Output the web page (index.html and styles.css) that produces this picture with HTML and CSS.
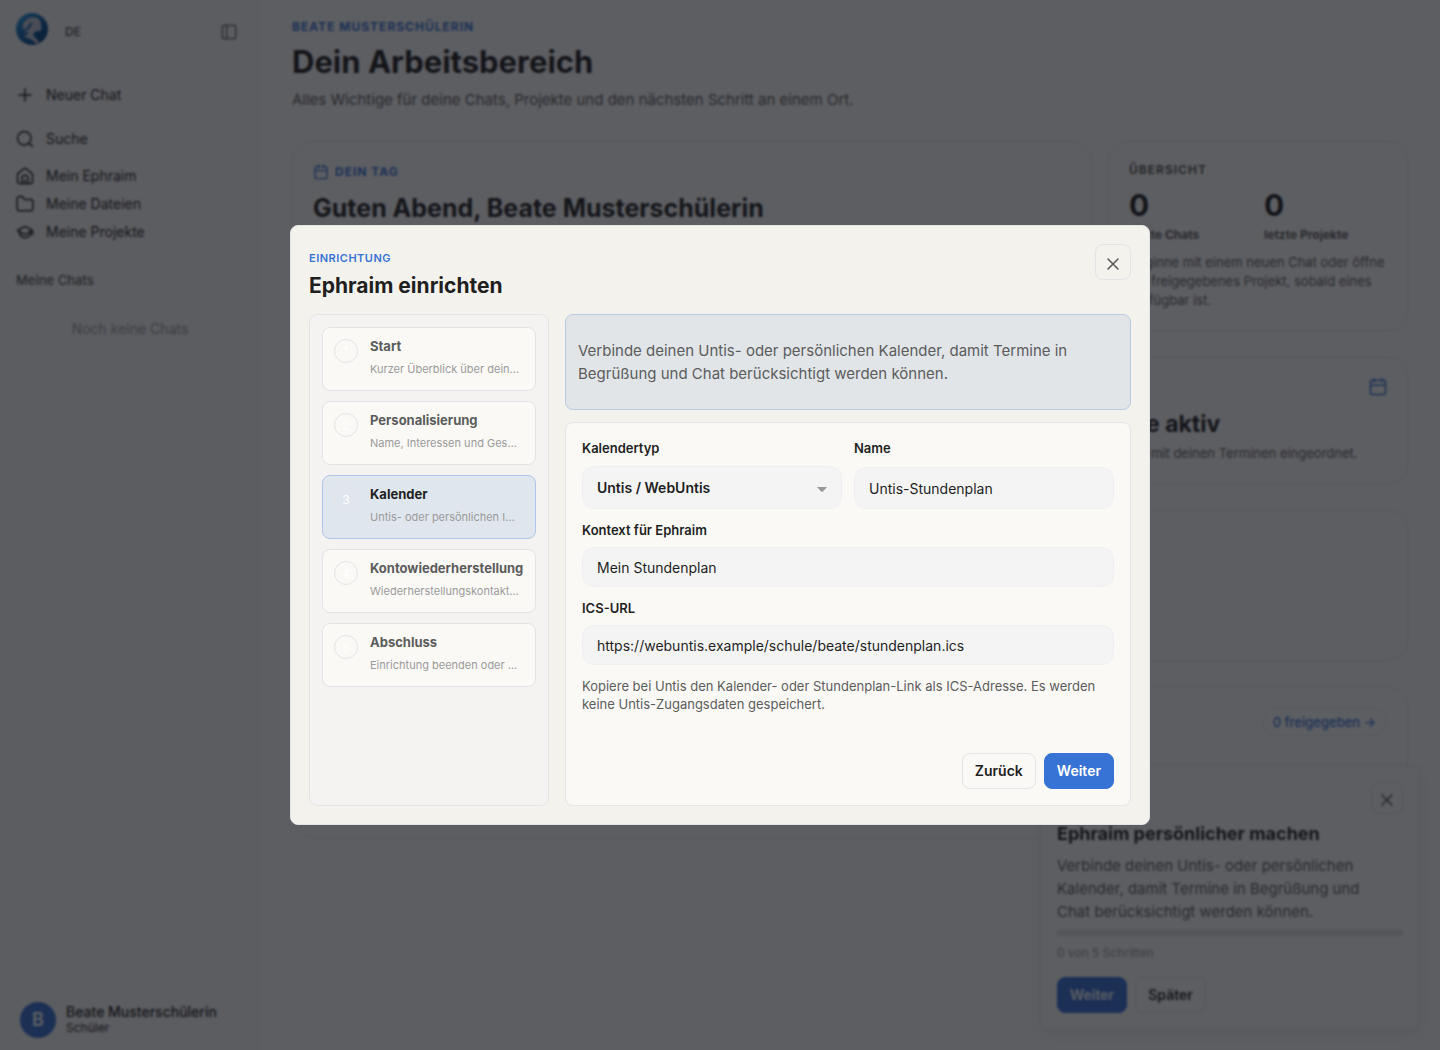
FILE: index.html
```html
<!DOCTYPE html>
<html lang="de">
<head>
    <meta charset="UTF-8">
    <meta name="viewport" content="width=device-width, initial-scale=1.0">
    <title>Ephraim - Dein Arbeitsbereich</title>
    <link rel="stylesheet" href="styles.css">
</head>
<body>
    <div class="app">
        <aside class="sidebar">
            <div class="sidebar-top">
                <svg class="logo" viewBox="0 0 32 32" aria-hidden="true">
                    <defs>
                        <linearGradient id="logo-fill" x1="0" y1="0" x2="1" y2="1">
                            <stop offset="0" stop-color="#2ba6ea"/>
                            <stop offset="0.5" stop-color="#0a5fa8"/>
                            <stop offset="1" stop-color="#04356f"/>
                        </linearGradient>
                    </defs>
                    <circle cx="16" cy="16" r="16" fill="url(#logo-fill)"/>
                    <path d="M9 8C12 4 19 3 23 6C25 8 25 11 25 13C26 16 25 18 22 18C19 18 17 20 17 22C18 24 21 26 23 29L20 31C18 27 13 25 7 24C10 23 12 21 13 19L8 20C6 16 6 11 9 8Z" fill="#c3c7d6"/>
                    <path d="M16 9C16 13 13 17 10 18L6 22C5 20 6 17 8 15L10 17C11 14 13 11 16 9Z" fill="#1769b5"/>
                </svg>
                <button class="lang" type="button">DE</button>
                <button class="icon-button" type="button" aria-label="Seitenleiste">
                    <svg class="icon-small" viewBox="0 0 24 24"><rect x="2" y="2" width="20" height="20" rx="3"/><path d="M8.500 2v20"/></svg>
                </button>
            </div>

            <nav>
                <ul class="nav-list">
                    <li class="nav-new"><a href="#chat"><svg class="icon" viewBox="0 0 24 24"><path d="M4 12h16M12 4v16"/></svg>Neuer Chat</a></li>
                    <li class="nav-search"><a href="#suche"><svg class="icon" viewBox="0 0 24 24"><circle cx="11" cy="11" r="9"/><path d="M17.500 17.500L22 22"/></svg>Suche</a></li>
                    <li><a href="#ephraim"><svg class="icon" viewBox="0 0 24 24"><path d="M2 10.500a3 3 0 0 1 1.200-2.400L10 2.700a3 3 0 0 1 4 0l6.800 5.400A3 3 0 0 1 22 10.500V19a3 3 0 0 1-3 3H5a3 3 0 0 1-3-3Z"/><path d="M8 22v-7a4 4 0 0 1 8 0v7M12 17v5"/></svg>Mein Ephraim</a></li>
                    <li><a href="#dateien"><svg class="icon" viewBox="0 0 24 24"><path d="M1.500 5a3 3 0 0 1 3-3h4l3 4h8a3 3 0 0 1 3 3v9a3 3 0 0 1-3 3h-15a3 3 0 0 1-3-3Z"/></svg>Meine Dateien</a></li>
                    <li><a href="#projekte"><svg class="icon" viewBox="0 0 24 24"><path d="M2 10l8-4.500a4 4 0 0 1 4 0L22 10l-8 4.500a4 4 0 0 1-4 0ZM22 10v6M5 12v4q7 7 14 0v-4"/></svg>Meine Projekte</a></li>
                </ul>
            </nav>

            <h2 class="sidebar-title">Meine Chats</h2>
            <p class="sidebar-empty">Noch keine Chats</p>

            <div class="user">
                <span class="avatar">B</span>
                <div>
                    <p class="user-name">Beate Musterschülerin</p>
                    <p class="user-role">Schüler</p>
                </div>
            </div>
        </aside>

        <main class="workspace">
            <header>
                <p class="eyebrow">Beate Musterschülerin</p>
                <h1>Dein Arbeitsbereich</h1>
                <p class="lead">Alles Wichtige für deine Chats, Projekte und den nächsten Schritt an einem Ort.</p>
            </header>

            <div class="row-top">
                <section class="card">
                    <p class="eyebrow eyebrow-icon"><svg class="icon-small" viewBox="0 0 24 24"><rect x="3" y="4" width="18" height="18" rx="3"/><path d="M3 10h18M8 1.500v4M16 1.500v4"/></svg>Dein Tag</p>
                    <h2 class="greeting">Guten Abend, Beate Musterschülerin</h2>
                </section>
                <section class="card">
                    <p class="eyebrow eyebrow-muted">Übersicht</p>
                    <div class="stats">
                        <div><strong>0</strong><span>letzte Chats</span></div>
                        <div><strong>0</strong><span>letzte Projekte</span></div>
                    </div>
                    <p class="card-text">Beginne mit einem neuen Chat oder öffne ein freigegebenes Projekt, sobald eines verfügbar ist.</p>
                </section>
            </div>

            <div class="row-tiles">
                <section class="card"></section>
                <section class="card"></section>
                <section class="card tile">
                    <svg class="icon tile-icon" viewBox="0 0 24 24"><rect x="2" y="3" width="20" height="19" rx="3"/><path d="M2 9.500h20M7 1v4M17 1v4"/></svg>
                    <h2>Termine aktiv</h2>
                    <p class="card-text">Projekte sind mit deinen Terminen eingeordnet.</p>
                </section>
            </div>

            <section class="card card-wide"></section>
            <section class="card card-wide card-projects">
                <a class="pill" href="#projekte">0 freigegeben →</a>
            </section>
        </main>
    </div>

    <aside class="toast">
        <div class="toast-top">
            <p class="modal-eyebrow">Einrichtung</p>
            <button class="close close-small" type="button" aria-label="Schließen"><svg viewBox="0 0 12 12"><path d="M1 1l10 10M11 1L1 11"/></svg></button>
        </div>
        <h2>Ephraim persönlicher machen</h2>
        <p class="toast-text">Verbinde deinen Untis- oder persönlichen Kalender, damit Termine in Begrüßung und Chat berücksichtigt werden können.</p>
        <div class="progress"></div>
        <p class="toast-steps">0 von 5 Schritten</p>
        <div class="actions">
            <button class="btn btn-primary" type="button">Weiter</button>
            <button class="btn" type="button">Später</button>
        </div>
    </aside>

    <div class="overlay">
        <div class="modal" role="dialog" aria-modal="true" aria-labelledby="modal-title">
            <header class="modal-header">
                <div>
                    <p class="modal-eyebrow">Einrichtung</p>
                    <h2 id="modal-title">Ephraim einrichten</h2>
                </div>
                <button class="close" type="button" aria-label="Schließen"><svg viewBox="0 0 12 12"><path d="M1 1l10 10M11 1L1 11"/></svg></button>
            </header>

            <div class="modal-body">
                <ol class="steps">
                    <li><button class="step" type="button"><span class="step-number">1</span><span class="step-text"><strong>Start</strong><small>Kurzer Überblick über deine Einrichtung</small></span></button></li>
                    <li><button class="step" type="button"><span class="step-number">2</span><span class="step-text"><strong>Personalisierung</strong><small>Name, Interessen und Gesprächsstil</small></span></button></li>
                    <li><button class="step active" type="button"><span class="step-number">3</span><span class="step-text"><strong>Kalender</strong><small>Untis- oder persönlichen ICS-Kalender</small></span></button></li>
                    <li><button class="step" type="button"><span class="step-number">4</span><span class="step-text"><strong>Kontowiederherstellung</strong><small>Wiederherstellungskontakte hinterlegen</small></span></button></li>
                    <li><button class="step" type="button"><span class="step-number">5</span><span class="step-text"><strong>Abschluss</strong><small>Einrichtung beenden oder übernehmen</small></span></button></li>
                </ol>

                <div class="modal-content">
                    <p class="intro">Verbinde deinen Untis- oder persönlichen Kalender, damit Termine in Begrüßung und Chat berücksichtigt werden können.</p>

                    <form class="form">
                        <div class="field-row">
                            <div class="field">
                                <label for="type">Kalendertyp</label>
                                <div class="select">
                                    <select id="type">
                                        <option>Untis / WebUntis</option>
                                    </select>
                                    <svg class="select-arrow" viewBox="0 0 10 5"><path d="M0 0h10L6 4.500Q5 5 4 4.500Z"/></svg>
                                </div>
                            </div>
                            <div class="field">
                                <label for="name">Name</label>
                                <input id="name" type="text" value="Untis-Stundenplan">
                            </div>
                        </div>
                        <div class="field">
                            <label for="context">Kontext für Ephraim</label>
                            <input id="context" type="text" value="Mein Stundenplan">
                        </div>
                        <div class="field">
                            <label for="url">ICS-URL</label>
                            <input id="url" type="url" value="https://webuntis.example/schule/beate/stundenplan.ics">
                        </div>
                        <p class="hint">Kopiere bei Untis den Kalender- oder Stundenplan-Link als ICS-Adresse. Es werden keine Untis-Zugangsdaten gespeichert.</p>
                        <div class="actions form-actions">
                            <button class="btn" type="button">Zurück</button>
                            <button class="btn btn-primary" type="button">Weiter</button>
                        </div>
                    </form>
                </div>
            </div>
        </div>
    </div>
</body>
</html>
```
FILE: styles.css
```css
* {
    margin: 0;
    padding: 0;
    box-sizing: border-box;
}

body {
    font-family: Inter, "Liberation Sans", sans-serif;
    font-size: 14px;
    line-height: 20px;
    background-color: #fbfbfb;
    color: #1f1f1f;
    overflow: hidden;
}

button, input, select {
    font: inherit;
    color: inherit;
}

button {
    background: none;
    border: none;
    cursor: pointer;
}

a {
    color: inherit;
    text-decoration: none;
}

ul, ol {
    list-style: none;
}

svg {
    fill: none;
    stroke: currentColor;
    stroke-width: 2;
    stroke-linecap: round;
    stroke-linejoin: round;
    flex-shrink: 0;
}

.icon {
    width: 18px;
    height: 18px;
}

.icon-small {
    width: 16px;
    height: 16px;
    display: block;
}

.app {
    display: flex;
    height: 100vh;
}

/* Seitenleiste */
.sidebar {
    width: 260px;
    flex-shrink: 0;
    display: flex;
    flex-direction: column;
    padding: 12px 16px;
    background-color: #f7f7f7;
}

.sidebar-top {
    display: flex;
    align-items: center;
    height: 40px;
    margin-bottom: 29px;
}

.logo {
    width: 32px;
    height: 32px;
    stroke: none;
    margin-bottom: 6px;
}

.lang {
    margin-left: 17px;
    font-size: 12px;
    font-weight: 600;
    color: #5c5c5c;
}

.icon-button {
    margin-left: auto;
    margin-right: 7px;
    color: #5c5c5c;
}

.nav-list a {
    display: flex;
    align-items: center;
    gap: 12px;
    height: 28px;
}

.nav-new {
    margin-bottom: 16px;
}

.nav-search {
    margin-bottom: 9px;
}

.sidebar-title {
    margin-top: 24px;
    font-size: 13px;
    font-weight: 500;
    color: #5c5c5c;
}

.sidebar-empty {
    margin-top: 29px;
    text-align: center;
    color: #9a9a9a;
}

.user {
    display: flex;
    align-items: center;
    gap: 10px;
    margin-top: auto;
    padding-left: 4px;
}

.avatar {
    width: 36px;
    height: 36px;
    border-radius: 50%;
    background-color: #3772d5;
    color: #fff;
    font-size: 18px;
    font-weight: 600;
    line-height: 36px;
    text-align: center;
}

.user-name {
    font-weight: 500;
    line-height: 16px;
}

.user-role {
    font-size: 12px;
    line-height: 16px;
}

/* Arbeitsbereich */
.workspace {
    flex: 1;
    padding: 17px 32px;
}

.eyebrow {
    font-size: 12px;
    font-weight: 700;
    letter-spacing: 1px;
    text-transform: uppercase;
    color: #3772d5;
}

.eyebrow-icon {
    display: flex;
    align-items: center;
    gap: 6px;
}

.eyebrow-muted {
    line-height: 16px;
    color: #5c5c5c;
}

.workspace h1 {
    font-size: 31px;
    line-height: 40px;
    margin-top: 5px;
}

.lead {
    margin-top: 8px;
    font-size: 15px;
    color: #5c5c5c;
}

.card {
    padding: 20px;
    border: 1px solid #e8e8e8;
    border-radius: 20px;
    background-color: #fcfcfc;
}

.row-top {
    display: grid;
    grid-template-columns: 1fr 300px;
    gap: 16px;
    margin-top: 31px;
}

.greeting {
    margin-top: 10px;
    font-size: 25px;
    line-height: 32px;
}

.stats {
    display: grid;
    grid-template-columns: 1fr 1fr;
    gap: 12px;
    margin: 11px 0 8px;
}

.stats strong {
    display: block;
    font-size: 30px;
    line-height: 32px;
}

.stats span {
    display: block;
    font-size: 12px;
    font-weight: 700;
    color: #5c5c5c;
    margin-top: 4px;
}

.card-text {
    font-size: 13px;
    line-height: 19px;
    color: #5c5c5c;
}

.row-tiles {
    display: grid;
    grid-template-columns: repeat(3, 1fr);
    gap: 16px;
    margin-top: 26px;
}

.tile-icon {
    display: block;
    margin-left: auto;
    color: #3772d5;
}

.tile h2 {
    margin: 13px 0 5px;
    font-size: 23px;
    line-height: 30px;
}

.card-wide {
    min-height: 151px;
    margin-top: 26px;
}

.card-projects {
    display: flex;
    justify-content: flex-end;
    align-items: flex-start;
}

.pill {
    padding: 2px 10px;
    border: 1px solid #e8e8e8;
    border-radius: 14px;
    font-size: 13px;
    font-weight: 500;
    line-height: 22px;
    color: #3772d5;
}

/* Hinweis unten rechts */
.toast {
    position: fixed;
    right: 20px;
    bottom: 20px;
    width: 380px;
    padding: 16px;
    border: 1px solid #e8e8e8;
    border-radius: 8px;
    background-color: #fafafa;
    box-shadow: 0 4px 16px rgba(0, 0, 0, 0.06);
}

.toast-top {
    display: flex;
    justify-content: space-between;
}

.toast h2 {
    margin-top: 8px;
    font-size: 18px;
    line-height: 24px;
}

.toast-text {
    margin-top: 8px;
    padding-right: 16px;
    font-size: 15px;
    line-height: 23px;
    color: #5c5c5c;
}

.progress {
    height: 6px;
    margin-top: 7px;
    border-radius: 3px;
    background-color: #e3e3e3;
}

.toast-steps {
    margin: 7px 0 14px;
    font-size: 12px;
    color: #9a9a9a;
}

.actions {
    display: flex;
    gap: 8px;
}

.btn {
    height: 36px;
    padding: 0 12px;
    border: 1px solid #e3e4e6;
    border-radius: 8px;
    font-weight: 600;
}

.btn-primary {
    border-color: #3772d5;
    background-color: #3772d5;
    color: #fff;
}

.close {
    display: flex;
    align-items: center;
    justify-content: center;
    width: 36px;
    height: 36px;
    border: 1px solid #e3e4e6;
    border-radius: 8px;
    color: #555;
}

.close svg {
    width: 12px;
    height: 12px;
    margin-top: 3px;
    stroke-width: 1.500;
}

.close-small {
    width: 32px;
    height: 32px;
}

/* Dialog */
.overlay {
    position: fixed;
    inset: 0;
    display: flex;
    align-items: center;
    justify-content: center;
    background-color: rgba(15, 17, 22, 0.67);
    backdrop-filter: blur(1px);
}

.modal {
    display: flex;
    flex-direction: column;
    width: 860px;
    max-width: 95%;
    min-height: 600px;
    padding: 18px;
    border: 1px solid #e3e4e6;
    border-radius: 8px;
    background-color: #f4f2ed;
}

.modal-header {
    display: flex;
    justify-content: space-between;
    align-items: flex-start;
    padding-bottom: 14px;
}

.modal-eyebrow {
    margin-top: 4px;
    font-size: 11px;
    font-weight: 600;
    letter-spacing: 0.500px;
    text-transform: uppercase;
    color: #3772d5;
}

.modal-header h2 {
    margin-top: 4px;
    font-size: 21px;
    font-weight: 700;
    line-height: 28px;
}

.modal-body {
    flex: 1;
    display: grid;
    grid-template-columns: 240px 1fr;
    gap: 16px;
}

.steps {
    display: flex;
    flex-direction: column;
    gap: 10px;
    padding: 12px;
    border: 1px solid #e3e4e6;
    border-radius: 8px;
    background-color: #f4f3f1;
}

.step {
    display: flex;
    gap: 12px;
    width: 100%;
    height: 64px;
    padding: 11px;
    border: 1px solid #e3e4e6;
    border-radius: 8px;
    background-color: #faf9f6;
    text-align: left;
}

.step-number {
    width: 24px;
    height: 24px;
    flex-shrink: 0;
    border: 1px solid #e3e4e6;
    border-radius: 50%;
    color: #fff;
    font-size: 12px;
    line-height: 24px;
    text-align: center;
}

.step-text {
    min-width: 0;
}

.step strong {
    display: block;
    font-size: 13px;
    font-weight: 700;
    line-height: 14px;
    color: #5c5c5c;
}

.step small {
    display: block;
    margin-top: 8px;
    padding-right: 4px;
    font-size: 11px;
    line-height: 16px;
    color: #9a9a9a;
    white-space: nowrap;
    overflow: hidden;
    text-overflow: ellipsis;
}

.step.active {
    border-color: #aec4e8;
    background-color: #e0e6ed;
}

.step.active strong {
    color: #1f1f1f;
}

.modal-content {
    display: flex;
    flex-direction: column;
    gap: 12px;
}

.intro {
    padding: 24px 12px;
    border: 1px solid #b7cbe6;
    border-radius: 8px;
    background-color: #e1e5e8;
    font-size: 15px;
    line-height: 23px;
    color: #5c5c5c;
}

.form {
    flex: 1;
    display: flex;
    flex-direction: column;
    gap: 12px;
    padding: 16px;
    border: 1px solid #e3e4e6;
    border-radius: 8px;
    background-color: #faf9f6;
}

.field-row {
    display: grid;
    grid-template-columns: 1fr 1fr;
    gap: 12px;
}

.field {
    display: flex;
    flex-direction: column;
    justify-content: space-between;
    gap: 8px;
}

.field-row .field {
    gap: 9px;
}

.field label {
    font-size: 13px;
    font-weight: 600;
    line-height: 18px;
}

.field input, .field select {
    width: 100%;
    height: 40px;
    padding: 0 14px;
    border: 1px solid #efeff0;
    border-radius: 12px;
    background-color: #f4f4f4;
    outline: none;
}

.field-row input {
    height: 42px;
}

.select {
    position: relative;
}

.field select {
    display: block;
    height: 43px;
    font-weight: 600;
    appearance: none;
}

.select-arrow {
    position: absolute;
    right: 15px;
    top: 21px;
    width: 10px;
    height: 5px;
    fill: #999;
    stroke: none;
    pointer-events: none;
}

.hint {
    font-size: 13px;
    line-height: 18px;
    color: #5c5c5c;
}

.form-actions {
    margin-top: auto;
    justify-content: flex-end;
}
```
